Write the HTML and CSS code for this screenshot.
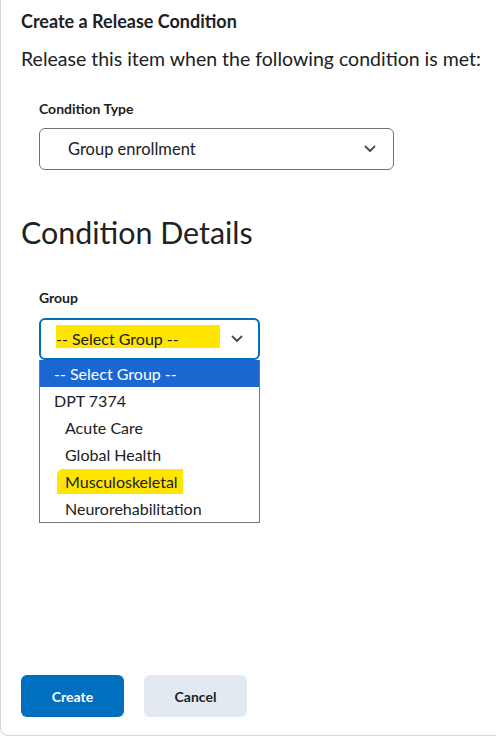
FILE: index.html
```html
<!DOCTYPE html>
<html>
<head>
<meta charset="utf-8">
<link rel="stylesheet" href="styles.css">
</head>
<body>
<div class="dialog">
  <h2 class="title">Create a Release Condition</h2>
  <p class="intro">Release this item when the following condition is met:</p>
  <div class="field field-type">
    <div class="label">Condition Type</div>
    <div class="select select-type">
      <span class="value">Group enrollment</span>
      <svg class="chev" width="12" height="8" viewBox="0 0 12 8"><path d="M1.5 1.5 L6 6 L10.5 1.5" fill="none" stroke="#494c4e" stroke-width="1.8" stroke-linecap="round" stroke-linejoin="round"/></svg>
    </div>
  </div>
  <h1 class="details">Condition Details</h1>
  <div class="field field-group">
    <div class="label">Group</div>
    <div class="select select-group">
      <span class="value hl-wide">-- Select Group --</span>
      <svg class="chev" width="12" height="8" viewBox="0 0 12 8"><path d="M1.5 1.5 L6 6 L10.5 1.5" fill="none" stroke="#494c4e" stroke-width="1.8" stroke-linecap="round" stroke-linejoin="round"/></svg>
    </div>
    <ul class="list">
      <li class="opt active">-- Select Group --</li>
      <li class="opt">DPT 7374</li>
      <li class="opt sub">Acute Care</li>
      <li class="opt sub">Global Health</li>
      <li class="opt sub"><span class="hl">Musculoskeletal</span></li>
      <li class="opt sub">Neurorehabilitation</li>
    </ul>
  </div>
  <div class="spacer"></div>
  <div class="buttons">
    <button class="btn primary">Create</button>
    <button class="btn secondary">Cancel</button>
  </div>
</div>
</body>
</html>
```
FILE: styles.css
```css
html, body {
  margin: 0;
  padding: 0;
  background: #ffffff;
}
body {
  font-family: Lato, "Open Sans", sans-serif;
  color: #202122;
}
.dialog {
  box-sizing: border-box;
  height: 736px;
  border-left: 1px solid #d3d9e1;
  border-bottom: 1px solid #d3d9e1;
  border-bottom-left-radius: 8px;
  padding: 9px 0 0 20px;
  display: flex;
  flex-direction: column;
}
.title {
  margin: 0;
  font-size: 18px;
  font-weight: 700;
  line-height: 24px;
}
.intro {
  margin: 13px 0 0 0;
  font-size: 19.5px;
  line-height: 26px;
  white-space: nowrap;
}
.field {
  padding-left: 18px;
}
.field-type {
  margin-top: 28px;
}
.label {
  font-size: 14px;
  font-weight: 700;
  line-height: 18px;
}
.select {
  box-sizing: border-box;
  display: flex;
  align-items: center;
  justify-content: space-between;
  height: 42px;
  border-radius: 6px;
  font-size: 16.5px;
}
.select-type {
  margin-top: 10px;
  width: 355px;
  border: 1px solid #6e7376;
  padding: 0 17px 0 28px;
}
.select-group {
  margin-top: 11px;
  width: 221px;
  border: 2px solid #006fbf;
  padding: 0 15px 0 15px;
  font-size: 16px;
}
.hl-wide {
  background: #ffe500;
  display: inline-block;
  width: 164px;
  height: 23px;
  line-height: 27px;
  margin-top: -6px;
}
.chev {
  display: block;
}
.details {
  margin: 44px 0 0 0;
  font-size: 30.4px;
  font-weight: 400;
  line-height: 36px;
}
.field-group {
  margin-top: 39px;
}
.list {
  list-style: none;
  margin: 0;
  padding: 0;
  width: 221px;
  box-sizing: border-box;
  border: 1px solid #767676;
  border-top: none;
  font-size: 16px;
}
.opt {
  height: 27px;
  line-height: 27px;
  padding-left: 14px;
}
.opt.active {
  background: #1a67d2;
  color: #ffffff;
}
.opt.sub {
  padding-left: 25px;
}
.hl {
  background: #ffe500;
  padding: 3px 5px 3px 8px;
  margin-left: -8px;
  border-top-left-radius: 6px;
}
.spacer {
  flex: 1;
}
.buttons {
  display: flex;
  gap: 20px;
  margin-bottom: 18px;
}
.btn {
  width: 103px;
  height: 42px;
  border: none;
  border-radius: 6px;
  font-family: Lato, "Open Sans", sans-serif;
  font-size: 14px;
  font-weight: 700;
}
.primary {
  background: #006fbf;
  color: #ffffff;
}
.secondary {
  background: #e3e9f1;
  color: #202122;
}
```
